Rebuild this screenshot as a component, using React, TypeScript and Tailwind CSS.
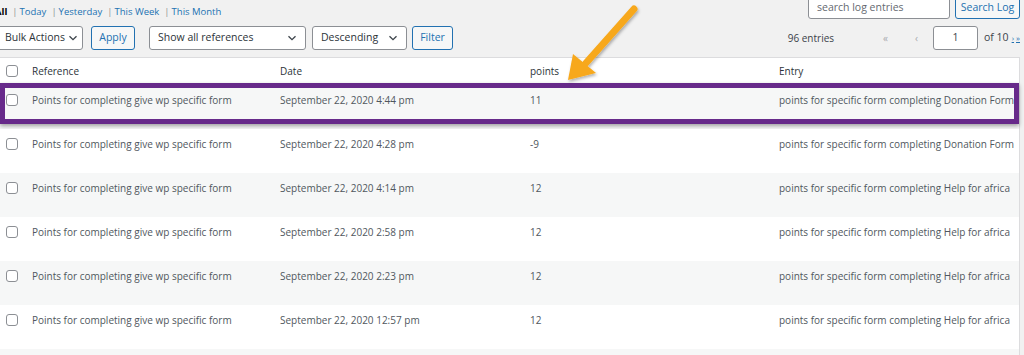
import React from 'react';

const rows = [
  { date: 'September 22, 2020 4:44 pm', points: '11', entry: 'points for specific form completing Donation Form' },
  { date: 'September 22, 2020 4:28 pm', points: '-9', entry: 'points for specific form completing Donation Form' },
  { date: 'September 22, 2020 4:14 pm', points: '12', entry: 'points for specific form completing Help for africa' },
  { date: 'September 22, 2020 2:58 pm', points: '12', entry: 'points for specific form completing Help for africa' },
  { date: 'September 22, 2020 2:23 pm', points: '12', entry: 'points for specific form completing Help for africa' },
  { date: 'September 22, 2020 12:57 pm', points: '12', entry: 'points for specific form completing Help for africa' },
  { date: 'September 22, 2020 12:41 pm', points: '12', entry: 'points for specific form completing Help for africa' },
];

const views = ['Today', 'Yesterday', 'This Week', 'This Month'];

const Chevron = () => (
  <svg width="10" height="10" viewBox="0 0 10 10" className="text-[#3c434a] shrink-0">
    <path d="M1.5 3.2 L5 6.7 L8.5 3.2" fill="none" stroke="currentColor" strokeWidth="1.3" />
  </svg>
);

const Select = ({ label, w }: { label: string; w: string }) => (
  <div className={`${w} h-6 bg-white border border-[#8c8f94] rounded-[3px] flex items-center justify-between pl-2 pr-2 text-[#2c3338]`}>
    <span>{label}</span>
    <Chevron />
  </div>
);

const Button = ({ label, w }: { label: string; w: string }) => (
  <div className={`${w} h-6 bg-[#f6f7f7] border border-[#2271b1] rounded-[3px] flex items-center justify-center text-[#2271b1]`}>
    {label}
  </div>
);

const Checkbox = () => <div className="w-3 h-3 border border-[#8c8f94] rounded-[3px] bg-white" />;

export default function App() {
  return (
    <div className="relative w-[1024px] h-[355px] overflow-hidden bg-[#f1f1f1] text-[10px] text-[#50575e] font-['Open_Sans',sans-serif] whitespace-nowrap">
      <div className="flex justify-between pr-1">
        {/* left: views + filters */}
        <div className="-ml-[5px]">
          <div className="h-[22px] pt-[2px] flex items-center text-[9.5px] text-[#2271b1]">
            <span className="font-bold text-black">All</span>
            {views.map((v) => (
              <span key={v} className="flex items-center">
                <span className="ml-[5px] mr-[2px] text-[#8c8f94]">|</span>
                <span>{v}</span>
              </span>
            ))}
          </div>
          <div className="mt-[4px] flex items-center text-[10.5px]">
            <div className="w-[88px] h-6 bg-white border border-[#8c8f94] rounded-[3px] flex items-center justify-between pl-[9px] pr-[4px] text-[#2c3338]">
              <span>Bulk Actions</span>
              <Chevron />
            </div>
            <div className="ml-2">
              <Button label="Apply" w="w-[44px]" />
            </div>
            <div className="ml-[14px]">
              <Select label="Show all references" w="w-[157px]" />
            </div>
            <div className="ml-[6px]">
              <Select label="Descending" w="w-[95px]" />
            </div>
            <div className="ml-[5px]">
              <Button label="Filter" w="w-[41px]" />
            </div>
          </div>
        </div>

        {/* right: search + pagination */}
        <div className="-mt-[3px] flex flex-col items-end">
          <div className="flex items-center gap-[5px] text-[10.5px]">
            <div className="w-[142px] h-[22px] bg-white border border-[#8c8f94] rounded-[3px] flex items-center px-2 text-[#646970]">
              search log entries
            </div>
            <Button label="Search Log" w="w-[65px] h-[22px]" />
          </div>
          <div className="mt-[7px] flex items-center h-6 text-[10px] text-[#3c434a]">
            <span>96 entries</span>
            <span className="ml-[49px] text-[#a7aaad]">«</span>
            <span className="ml-[27px] text-[#a7aaad]">‹</span>
            <div className="ml-[15px] w-[45px] h-6 bg-white border border-[#8c8f94] rounded-[3px] flex items-center justify-center text-[10.5px]">1</div>
            <span className="ml-[6px] text-[10.5px]">of 10</span>
            <span className="ml-[3px] text-[8px] text-[#2271b1] underline">›</span>
            <span className="ml-[2px] text-[8px] text-[#2271b1] underline">»</span>
          </div>
        </div>
      </div>

      {/* table */}
      <div className="mt-[7px] mr-1 bg-white border border-l-0 border-[#dcdcde]">
        <div className="grid grid-cols-[32px_248px_250px_249px_1fr] items-center h-[27px] border-b border-[#c3c4c7] text-[#2c3338]">
          <div className="pl-[6px]"><Checkbox /></div>
          <div>Reference</div>
          <div>Date</div>
          <div>points</div>
          <div>Entry</div>
        </div>
        {rows.map((r, i) => (
          <div
            key={i}
            className={`relative grid grid-cols-[32px_248px_250px_249px_1fr] items-start h-[44px] pt-[8px] ${i % 2 === 0 ? 'bg-[#f6f7f7]' : 'bg-white'}`}
          >
            <div className="pl-[6px] pt-[1px]"><Checkbox /></div>
            <div>Points for completing give wp specific form</div>
            <div>{r.date}</div>
            <div>{r.points}</div>
            <div>{r.entry}</div>
            {i === 0 && (
              <div className="absolute left-0 right-0 top-[-2px] h-[41px] border-[5px] border-[#672a8a] shadow-[0_2px_4px_rgba(0,0,0,0.35)]" />
            )}
          </div>
        ))}
      </div>

      {/* annotation arrow */}
      <svg className="absolute left-[550px] top-0" width="110" height="95" viewBox="550 0 110 95">
        <defs>
          <filter id="sh" x="-20%" y="-20%" width="140%" height="140%">
            <feDropShadow dx="1" dy="2" stdDeviation="1.5" floodColor="#000" floodOpacity="0.3" />
          </filter>
        </defs>
        <g filter="url(#sh)" fill="#f7a81b">
          <line x1="634" y1="9" x2="586" y2="63" stroke="#f7a81b" strokeWidth="7" strokeLinecap="round" />
          <polygon points="568,80 573,54 596,73" />
        </g>
      </svg>
    </div>
  );
}
